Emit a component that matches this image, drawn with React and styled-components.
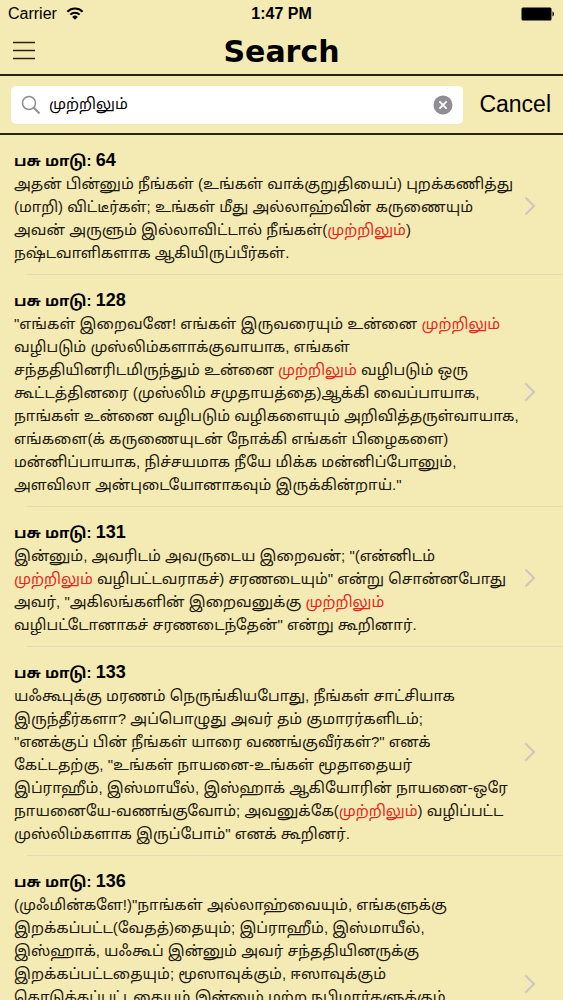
import React, { useState } from "react"
import styled, { createGlobalStyle } from "styled-components"

const verses = [
    {
        id: 64,
        lines: 4,
        text: `அதன் பின்னும் நீங்கள் (உங்கள் வாக்குறுதியைப்) புறக்கணித்து
(மாறி) விட்டீர்கள்; உங்கள் மீது அல்லாஹ்வின் கருணையும்
அவன் அருளும் இல்லாவிட்டால் நீங்கள்(முற்றிலும்)
நஷ்டவாளிகளாக ஆகியிருப்பீர்கள்.`
    },
    {
        id: 128,
        lines: 8,
        text: `"எங்கள் இறைவனே! எங்கள் இருவரையும் உன்னை முற்றிலும்
வழிபடும் முஸ்லிம்களாக்குவாயாக, எங்கள்
சந்ததியினரிடமிருந்தும் உன்னை முற்றிலும் வழிபடும் ஒரு
கூட்டத்தினரை (முஸ்லிம் சமுதாயத்தை)ஆக்கி வைப்பாயாக,
நாங்கள் உன்னை வழிபடும் வழிகளையும் அறிவித்தருள்வாயாக,
எங்களை(க் கருணையுடன் நோக்கி எங்கள் பிழைகளை)
மன்னிப்பாயாக, நிச்சயமாக நீயே மிக்க மன்னிப்போனும்,
அளவிலா அன்புடையோனாகவும் இருக்கின்றாய்."`
    },
    {
        id: 131,
        lines: 4,
        text: `இன்னும், அவரிடம் அவருடைய இறைவன்; "(என்னிடம்
முற்றிலும் வழிபட்டவராகச்) சரணடையும்" என்று சொன்னபோது
அவர், "அகிலங்களின் இறைவனுக்கு முற்றிலும்
வழிபட்டோனாகச் சரணடைந்தேன்" என்று கூறினார்.`
    },
    {
        id: 133,
        lines: 7,
        text: `யஃகூபுக்கு மரணம் நெருங்கியபோது, நீங்கள் சாட்சியாக
இருந்தீர்களா? அப்பொழுது அவர் தம் குமாரர்களிடம்;
"எனக்குப் பின் நீங்கள் யாரை வணங்குவீர்கள்?" எனக்
கேட்டதற்கு, "உங்கள் நாயனை-உங்கள் மூதாதையர்
இப்ராஹீம், இஸ்மாயீல், இஸ்ஹாக் ஆகியோரின் நாயனை-ஒரே
நாயனையே-வணங்குவோம்; அவனுக்கே(முற்றிலும்) வழிப்பட்ட
முஸ்லிம்களாக இருப்போம்" எனக் கூறினர்.`
    },
    {
        id: 136,
        lines: 9,
        text: `(முஃமின்களே!)"நாங்கள் அல்லாஹ்வையும், எங்களுக்கு
இறக்கப்பட்ட(வேதத்)தையும்; இப்ராஹீம், இஸ்மாயீல்,
இஸ்ஹாக், யஃகூப் இன்னும் அவர் சந்ததியினருக்கு
இறக்கப்பட்டதையும்; மூஸாவுக்கும், ஈஸாவுக்கும்
கொடுக்கப்பட்டதையும் இன்னும் மற்ற நபிமார்களுக்கும்`
    }
]

const highlight = (text, query) => {
    if (!query) return text
    return text.split(query).map((part, i) => (
        <React.Fragment key={i}>
            {i > 0 && <Match>{query}</Match>}
            {part}
        </React.Fragment>
    ))
}

const App = () => {
    const [query, setQuery] = useState("முற்றிலும்")

    return (
        <>
            <GlobalStyle />
            <Screen>
                <StatusBar>
                    <Carrier>
                        Carrier
                        <svg width="18" height="14" viewBox="0 0 18 14">
                            <g fill="none" stroke="#000" strokeWidth="2">
                                <path d="M1.4 4.7a10.8 10.8 0 0 1 15.2 0" />
                                <path d="M4.3 7.6a6.7 6.7 0 0 1 9.4 0" />
                            </g>
                            <path d="M9 12.7 6.2 9.9a4 4 0 0 1 5.6 0z" />
                        </svg>
                    </Carrier>
                    <Clock>1:47 PM</Clock>
                    <Battery>
                        <svg width="34" height="14" viewBox="0 0 34 14">
                            <rect x="0.5" y="0.5" width="30" height="13" rx="1.5" />
                            <path d="M31.5 4.6c2 .6 2 4.2 0 4.8z" />
                        </svg>
                    </Battery>
                </StatusBar>

                <NavBar>
                    <MenuButton aria-label="Menu">
                        <svg width="24" height="20" viewBox="0 0 24 20">
                            <path d="M1 1.5h22M1 9.5h22M1 17.5h22" stroke="#2a2415" strokeWidth="1.5" />
                        </svg>
                    </MenuButton>
                    <Title>Search</Title>
                </NavBar>

                <SearchBar>
                    <SearchField>
                        <svg width="20" height="20" viewBox="0 0 20 20" fill="none" stroke="#8e8e93" strokeWidth="1.5">
                            <circle cx="8" cy="8" r="6.5" />
                            <path d="M12.8 12.8 18.5 18.5" strokeWidth="2" />
                        </svg>
                        <SearchInput
                            type="text"
                            aria-label="Search"
                            value={query}
                            onChange={(e) => setQuery(e.target.value)}
                        />
                        <ClearButton aria-label="Clear" onClick={() => setQuery("")}>
                            <svg width="20" height="20" viewBox="0 0 20 20">
                                <circle cx="10" cy="10" r="9.5" fill="#8e8e93" />
                                <path d="m6.4 6.4 7.2 7.2m0-7.2-7.2 7.2" stroke="#fff" strokeWidth="2" />
                            </svg>
                        </ClearButton>
                    </SearchField>
                    <CancelButton>Cancel</CancelButton>
                </SearchBar>

                <Results>
                    {verses.map((verse) => (
                        <Result key={verse.id}>
                            <ResultLink href={"#verse-" + verse.id}>
                                <VerseBody $lines={verse.lines}>
                                    <VerseTitle>பசு மாடு: <VerseNumber>{verse.id}</VerseNumber></VerseTitle>
                                    <VerseText>{highlight(verse.text, query)}</VerseText>
                                </VerseBody>
                                <Chevron width="12" height="20" viewBox="0 0 12 20">
                                    <path d="m1.5 1.5 8.5 8.5-8.5 8.5" />
                                </Chevron>
                            </ResultLink>
                        </Result>
                    ))}
                </Results>
            </Screen>
        </>
    )
}

const GlobalStyle = createGlobalStyle`
*{
    box-sizing:border-box;
}
body{
    margin:0;
    background:#f4eab4;
    color:#1c180c;
    font-family:"Liberation Sans", "Noto Sans Tamil", "Noto Sans", sans-serif;
}
button{
    border:0;
    padding:0;
    background:none;
    color:#000;
    font-family:inherit;
    cursor:pointer;
}
svg{
    display:block;
    flex-shrink:0;
}
`
const Screen = styled.div`
height:100vh;
display:flex;
flex-direction:column;
overflow:hidden;
`
const StatusBar = styled.div`
display:grid;
grid-template-columns:1fr auto 1fr;
align-items:center;
height:28px;
padding:0 8px;
font-size:16px;
color:#000;
`
const Carrier = styled.div`
display:flex;
align-items:center;
gap:9px;
`
const Clock = styled.div`
font-weight:bold;
`
const Battery = styled.div`
justify-self:end;
`
const NavBar = styled.header`
display:grid;
grid-template-columns:1fr auto 1fr;
align-items:center;
height:48px;
padding:0 12px;
border-bottom:2px solid #2a2415;
`
const MenuButton = styled.button`
justify-self:start;
`
const Title = styled.h1`
margin:0;
padding-top:2px;
font-family:"DejaVu Sans", sans-serif;
font-size:30px;
line-height:36px;
color:#000;
`
const SearchBar = styled.div`
display:flex;
align-items:center;
gap:16px;
height:59px;
padding:0 12px 0 11px;
border-bottom:2px solid #2a2415;
`
const SearchField = styled.div`
flex:1;
display:flex;
align-items:center;
gap:8px;
height:38px;
padding:0 10px;
border-radius:5px;
background:#fff;
`
const SearchInput = styled.input`
flex:1;
min-width:0;
height:100%;
border:0;
padding:0;
outline:none;
background:none;
color:#000;
font-family:inherit;
font-size:15px;
`
const ClearButton = styled.button`
border-radius:50%;
`
const CancelButton = styled.button`
font-size:23px;
`
const Results = styled.ul`
flex:1;
min-height:0;
margin:0;
padding:0;
list-style:none;
overflow:hidden;
`
const Result = styled.li`
&::after{
    content:"";
    display:block;
    height:1px;
    margin-left:27px;
    background:#e3d9b8;
}
`
const ResultLink = styled.a`
display:flex;
align-items:center;
justify-content:space-between;
padding:14px 27px 10px 14px;
color:inherit;
text-decoration:none;
`
const VerseBody = styled.div`
min-width:0;
min-height:${(p) => (p.$lines + 1) * 23}px;
`
const VerseTitle = styled.h2`
margin:0;
height:23px;
font-size:15px;
line-height:23px;
color:#000;
`
const VerseNumber = styled.span`
font-size:18px;
`
const VerseText = styled.p`
margin:0;
font-size:15px;
line-height:23px;
white-space:pre;
`
const Match = styled.span`
color:#e8261c;
`
const Chevron = styled.svg`
margin-bottom:2px;
fill:none;
stroke:#cfc6bf;
stroke-width:2;
`
export default App
